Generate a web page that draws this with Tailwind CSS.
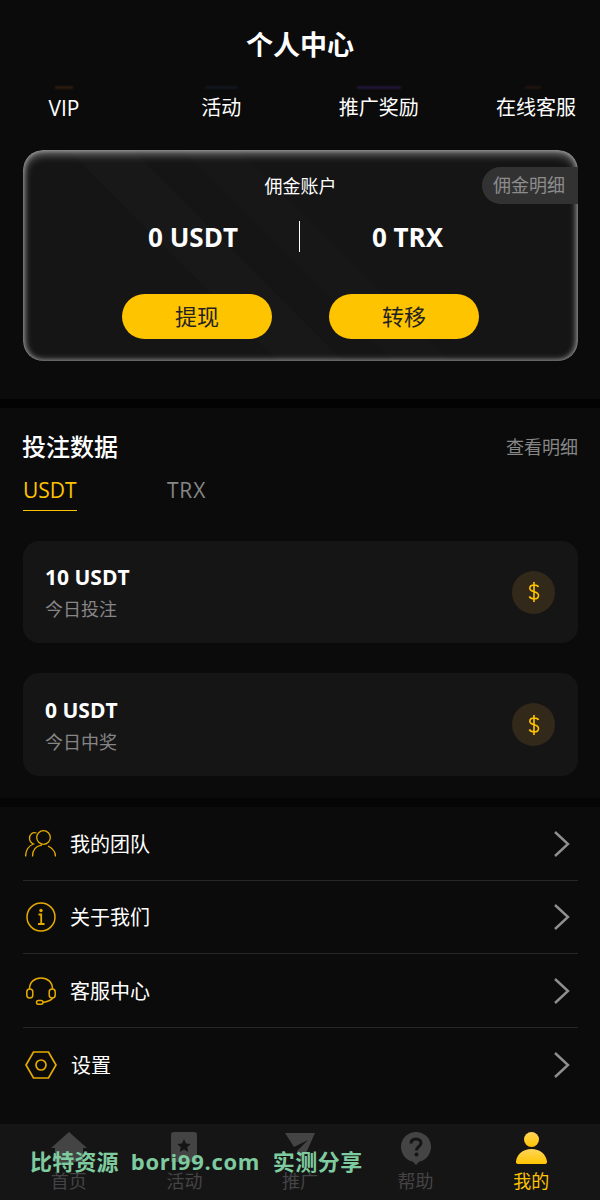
<!DOCTYPE html>
<html lang="zh-CN">
<head>
<meta charset="utf-8"/>
<meta content="width=device-width, initial-scale=1.0" name="viewport"/>
<title>个人中心</title>
<script src="https://cdn.jsdelivr.net/npm/@tailwindcss/browser@4"></script>
</head>
<body class="bg-[#0b0b0b] font-['Open_Sans','Noto_Sans_CJK_SC',sans-serif]">
<div class="relative w-[600px] h-[1200px] overflow-hidden bg-[#0b0b0b] text-white">

  <!-- header -->
  <div class="h-[88px] flex items-center justify-center">
    <h1 class="text-[27px] leading-none font-bold">个人中心</h1>
  </div>

  <!-- quick links, icons cut off above the labels -->
  <div class="h-[40px] px-[24px] flex justify-between text-[20px] text-center">
    <div class="relative w-[80px] leading-[40px]"><span class="absolute left-[31px] -top-[1px] w-[18px] h-[1px] bg-[#6a3a14] blur-[1px]"></span><span class="text-[21px]">VIP</span></div>
    <div class="relative w-[80px] leading-[40px]"><span class="absolute left-[24px] -top-[1px] w-[32px] h-[1px] bg-[#1c2a44] blur-[1px]"></span>活动</div>
    <div class="relative w-[80px] leading-[40px]"><span class="absolute left-[18px] -top-[1px] w-[44px] h-[1px] bg-[#4a2a86] blur-[1px]"></span>推广奖励</div>
    <div class="relative w-[80px] leading-[40px]"><span class="absolute left-[29px] -top-[1px] w-[16px] h-[1px] bg-[#4a2416] blur-[1px]"></span>在线客服</div>
  </div>

  <!-- commission account card -->
  <div class="pl-[23px] pr-[22px] pt-[22px] pb-[38px]">
    <div class="relative h-[211px] rounded-[20px] bg-[#161516] overflow-hidden">
      <svg class="absolute inset-0" width="555" height="211" viewBox="0 0 555 211">
        <polygon points="45,0 110,0 320,211 255,211" fill="#191819"/>
        <polygon points="160,0 215,0 426,211 371,211" fill="#181718"/>
      </svg>
      <!-- inner rim light sits above the stripes -->
      <div class="absolute inset-0 rounded-[20px] shadow-[inset_0_4px_10px_rgba(255,255,255,0.45),inset_0_-2px_6px_rgba(255,255,255,0.25),inset_2px_0_5px_rgba(255,255,255,0.18),inset_-2px_0_5px_rgba(255,255,255,0.18)]"></div>
      <div class="relative h-full">
        <p class="pt-[23px] text-center text-[18px] leading-[26px]">佣金账户</p>
        <div class="absolute right-0 top-[17px] h-[37px] w-[96px] pl-[11px] rounded-l-[19px] bg-[#333233] text-[18px] leading-[37px] text-[#8c8c8c]">佣金明细</div>
        <div class="mt-[22px] flex items-center h-[31px]">
          <div class="w-[276px] pl-[64px] text-center text-[26px] font-bold leading-none">0 USDT</div>
          <div class="w-px h-[31px] bg-white"></div>
          <div class="flex-1 pr-[63px] text-center text-[26px] font-bold leading-none">0 TRX</div>
        </div>
        <div class="mt-[42px] pl-[99px] flex gap-[57px]">
          <button class="w-[150px] h-[45px] rounded-full bg-[#ffc400] text-[#222] text-[22px]">提现</button>
          <button class="w-[150px] h-[45px] rounded-full bg-[#ffc400] text-[#222] text-[22px]">转移</button>
        </div>
      </div>
    </div>
  </div>

  <div class="h-[9px] bg-[#030303]"></div>

  <!-- betting data -->
  <div class="pl-[23px] pr-[22px] h-[390px]">
    <div class="pt-[18px] h-[60px] flex items-center justify-between">
      <h2 class="-ml-[1px] text-[24px] font-medium leading-none">投注数据</h2>
      <span class="text-[18px] text-[#868686]">查看明细</span>
    </div>
    <div class="flex gap-[90px] h-[43px]">
      <div class="w-[54px] h-[43px] border-b border-[#ffc400] text-[#ffc400] text-[21px] leading-[44px] whitespace-nowrap">USDT</div>
      <div class="text-[#868686] text-[21px] leading-[44px] tracking-[0.8px]">TRX</div>
    </div>
    <div class="mt-[30px] h-[102px] rounded-[16px] bg-[#161516] pl-[22px] pr-[23px] flex items-center justify-between">
      <div>
        <p class="text-[21px] font-bold leading-[30px]">10 USDT</p>
        <p class="mt-[4px] text-[18px] leading-[26px] text-[#868686]">今日投注</p>
      </div>
      <div class="w-[43px] h-[43px] rounded-full bg-[#32291a] flex items-center justify-center">
        <svg class="ml-[1px]" width="12" height="22" viewBox="0 0 12 22" fill="none" stroke="#ffc400" stroke-width="1.600"><path d="M10.500 6 C9.800 4.600 8.300 4 6 4 C3.300 4 1.800 5.400 1.800 7.300 C1.800 11.800 10.500 9.700 10.500 14.400 C10.500 16.500 8.700 17.800 6 17.800 C3.800 17.800 2.200 17 1.300 15.500 M6 1 V21"/></svg>
      </div>
    </div>
    <div class="mt-[30px] h-[103px] rounded-[16px] bg-[#161516] pl-[22px] pr-[23px] flex items-center justify-between">
      <div>
        <p class="text-[21px] font-bold leading-[30px]">0 USDT</p>
        <p class="mt-[4px] text-[18px] leading-[26px] text-[#868686]">今日中奖</p>
      </div>
      <div class="w-[43px] h-[43px] rounded-full bg-[#32291a] flex items-center justify-center">
        <svg class="ml-[1px]" width="12" height="22" viewBox="0 0 12 22" fill="none" stroke="#ffc400" stroke-width="1.600"><path d="M10.500 6 C9.800 4.600 8.300 4 6 4 C3.300 4 1.800 5.400 1.800 7.300 C1.800 11.800 10.500 9.700 10.500 14.400 C10.500 16.500 8.700 17.800 6 17.800 C3.800 17.800 2.200 17 1.300 15.500 M6 1 V21"/></svg>
      </div>
    </div>
  </div>

  <div class="h-[9px] bg-[#050505]"></div>

  <!-- menu -->
  <div class="pl-[23px] pr-[22px]">
    <div class="h-[74px] flex items-center border-b border-[#272727]">
      <svg class="ml-[2px] w-[31px] h-[27px]" viewBox="0 0 31 27" fill="none" stroke="#e5ab00" stroke-width="1.300"><circle cx="18.500" cy="7.500" r="6.800"/><path d="M7.500 26.500 C7.500 20 11 16 17 15.200 M23 16 C27 18 30.500 21.500 30.500 26.500"/><path d="M11.500 3 C7.500 1.500 4.500 4.500 4.500 8.500 C4.500 10.500 5.500 12.500 8.500 14 C3.500 16 0.600 20.500 0.600 26.500"/></svg>
      <span class="ml-[14px] mt-[2px] text-[20px]">我的团队</span>
      <svg class="ml-auto mr-[8px] w-[18px] h-[28px]" viewBox="0 0 18 28" fill="none" stroke="#8f8f8f" stroke-width="2.400"><path d="M3 2 L16 14 L3 26"/></svg>
    </div>
    <div class="h-[73px] flex items-center border-b border-[#272727]">
      <svg class="ml-[3px] w-[30px] h-[30px]" viewBox="0 0 30 30" fill="none" stroke="#e5ab00" stroke-width="1.500"><circle cx="15" cy="15" r="14"/><circle cx="15" cy="8.500" r="1.700" fill="#e5ab00" stroke="none"/><path d="M12.500 12.500 H15.200 V21.500 M12 22 H18.500" stroke-width="1.800"/></svg>
      <span class="ml-[14px] mt-[2px] text-[20px]">关于我们</span>
      <svg class="ml-auto mr-[8px] w-[18px] h-[28px]" viewBox="0 0 18 28" fill="none" stroke="#8f8f8f" stroke-width="2.400"><path d="M3 2 L16 14 L3 26"/></svg>
    </div>
    <div class="h-[74px] flex items-center border-b border-[#272727]">
      <svg class="ml-[3px] w-[30px] h-[28px]" viewBox="0 0 30 28" fill="none" stroke="#e5ab00" stroke-width="1.500"><path d="M3.500 12 C3.500 5 8.500 1 15 1 C21.500 1 26.500 5 26.500 12"/><rect x="0.800" y="12" width="6" height="9" rx="3"/><rect x="23.200" y="12" width="6" height="9" rx="3"/><path d="M26.500 21 C26 23.500 22 24.500 17 25.500"/><rect x="10.500" y="23.500" width="6.500" height="3.800" rx="1.900"/></svg>
      <span class="ml-[14px] mt-[2px] text-[20px]">客服中心</span>
      <svg class="ml-auto mr-[8px] w-[18px] h-[28px]" viewBox="0 0 18 28" fill="none" stroke="#8f8f8f" stroke-width="2.400"><path d="M3 2 L16 14 L3 26"/></svg>
    </div>
    <div class="h-[73px] flex items-center">
      <svg class="ml-[2px] w-[32px] h-[28px]" viewBox="0 0 32 28" fill="none" stroke="#e5ab00" stroke-width="1.700"><path d="M8.500 1 H23.500 L31 14 L23.500 27 H8.500 L1 14 Z"/><circle cx="16" cy="14" r="5"/></svg>
      <span class="ml-[14px] mt-[2px] text-[20px]">设置</span>
      <svg class="ml-auto mr-[8px] w-[18px] h-[28px]" viewBox="0 0 18 28" fill="none" stroke="#8f8f8f" stroke-width="2.400"><path d="M3 2 L16 14 L3 26"/></svg>
    </div>
  </div>

  <!-- bottom tab bar -->
  <div class="absolute left-0 right-0 bottom-0 h-[76px] bg-[#161516] grid grid-cols-5 px-[11px] text-[18px] text-[#444444] text-center">
    <div class="flex flex-col items-center pt-[8px]">
      <div class="h-[36px]"><svg width="36" height="30" viewBox="0 0 36 30" fill="#444444"><path d="M18 0 L36 16 H32 V30 H4 V16 H0 Z"/></svg></div>
      <span class="leading-[26px]">首页</span>
    </div>
    <div class="flex flex-col items-center pt-[8px]">
      <div class="h-[36px]"><svg width="26" height="30" viewBox="0 0 26 30" fill="#444444"><path d="M3 0 H23 A3 3 0 0 1 26 3 V30 H0 V3 A3 3 0 0 1 3 0 Z"/><path d="M13 7 L15 11.600 L19.800 12 L16.200 15.200 L17.300 20 L13 17.400 L8.700 20 L9.800 15.200 L6.200 12 L11 11.600 Z" fill="#161516"/></svg></div>
      <span class="leading-[26px]">活动</span>
    </div>
    <div class="flex flex-col items-center pt-[8px]">
      <div class="h-[36px]"><svg width="32" height="30" viewBox="0 0 32 30" fill="#444444"><path d="M1 1 H31 L18 30 L13 19 L24 8 L10 15 Z"/></svg></div>
      <span class="leading-[26px]">推广</span>
    </div>
    <div class="flex flex-col items-center pt-[8px]">
      <div class="h-[36px]"><svg width="30" height="33" viewBox="0 0 30 33" fill="#444444"><path d="M15 0 A15 15 0 0 1 18 29.700 L15 33 L12 29.700 A15 15 0 0 1 15 0 Z"/><path d="M10 11.500 C10 8.500 12 7 15 7 C18 7 20 8.800 20 11.200 C20 14.500 15.500 14.500 15.500 18.500" fill="none" stroke="#161516" stroke-width="3"/><circle cx="15.500" cy="22.500" r="2" fill="#161516"/></svg></div>
      <span class="leading-[26px]">帮助</span>
    </div>
    <div class="flex flex-col items-center pt-[8px] text-[#ffc400]">
      <div class="h-[36px]"><svg width="31" height="32" viewBox="0 0 31 32"><defs><linearGradient id="meGrad" x1="0" y1="0" x2="0" y2="1"><stop offset="0" stop-color="#ffd65a"/><stop offset="1" stop-color="#ffc400"/></linearGradient></defs><circle cx="15.500" cy="7.500" r="7.500" fill="url(#meGrad)"/><path d="M2 32 A2 2 0 0 1 0 29.500 C1 22 7 17 15.500 17 C24 17 30 22 31 29.500 A2 2 0 0 1 29 32 Z" fill="url(#meGrad)"/></svg></div>
      <span class="leading-[26px]">我的</span>
    </div>
  </div>

  <!-- site watermark across the tab bar -->
  <div class="absolute left-[30px] top-[1148px] flex text-[22px] leading-[26px] font-bold text-[#7ecb9f] whitespace-nowrap">
    <span class="tracking-[0.2px]">比特资源</span>
    <span class="ml-[12px] w-[130px] tracking-[0.7px]">bori99.com</span>
    <span class="ml-[12px] tracking-[0.5px]">实测分享</span>
  </div>
</div>
</body>
</html>
